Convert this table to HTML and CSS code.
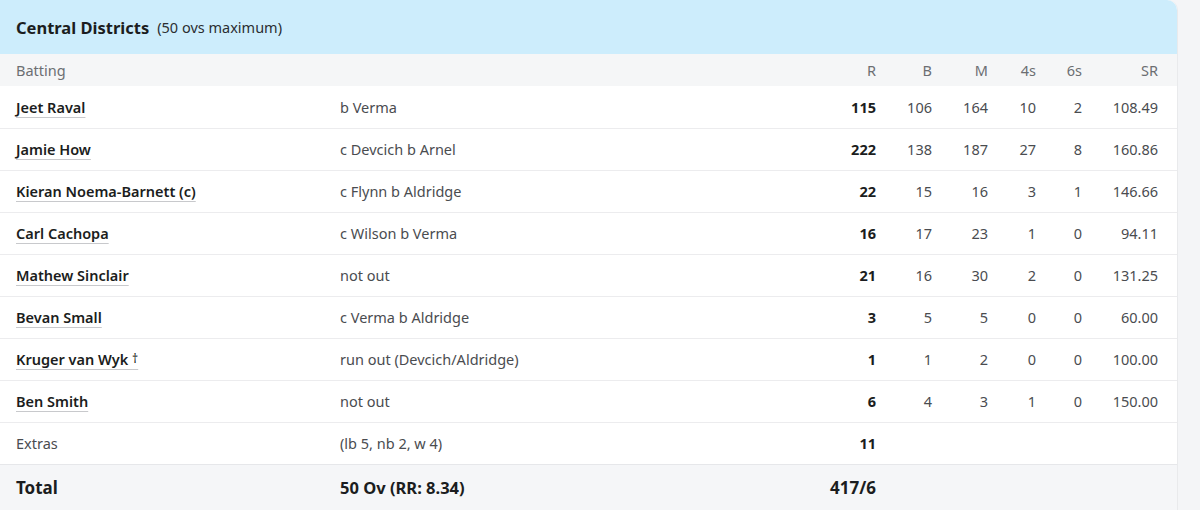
FILE: index.html
```html
<!DOCTYPE html>
<html>
<head>
<meta charset="utf-8">
<link rel="stylesheet" href="styles.css">
</head>
<body>
<div class="card">
  <div class="card-head">
    <span class="team">Central Districts</span>
    <span class="overs">(50 ovs maximum)</span>
  </div>
  <table class="score">
    <colgroup>
      <col class="c-name"><col class="c-dis"><col class="c-r"><col class="c-b"><col class="c-m"><col class="c-4"><col class="c-6"><col class="c-sr">
    </colgroup>
    <thead>
      <tr><th class="l">Batting</th><th></th><th>R</th><th>B</th><th>M</th><th>4s</th><th>6s</th><th class="last">SR</th></tr>
    </thead>
    <tbody>
      <tr><td class="l"><a class="name">Jeet Raval </a></td><td class="dis">b Verma</td><td class="runs">115</td><td>106</td><td>164</td><td>10</td><td>2</td><td class="last">108.49</td></tr>
      <tr><td class="l"><a class="name">Jamie How </a></td><td class="dis">c Devcich b Arnel</td><td class="runs">222</td><td>138</td><td>187</td><td>27</td><td>8</td><td class="last">160.86</td></tr>
      <tr><td class="l"><a class="name">Kieran Noema-Barnett (c)</a></td><td class="dis">c Flynn b Aldridge</td><td class="runs">22</td><td>15</td><td>16</td><td>3</td><td>1</td><td class="last">146.66</td></tr>
      <tr><td class="l"><a class="name">Carl Cachopa </a></td><td class="dis">c Wilson b Verma</td><td class="runs">16</td><td>17</td><td>23</td><td>1</td><td>0</td><td class="last">94.11</td></tr>
      <tr><td class="l"><a class="name">Mathew Sinclair </a></td><td class="dis">not out</td><td class="runs">21</td><td>16</td><td>30</td><td>2</td><td>0</td><td class="last">131.25</td></tr>
      <tr><td class="l"><a class="name">Bevan Small </a></td><td class="dis">c Verma b Aldridge</td><td class="runs">3</td><td>5</td><td>5</td><td>0</td><td>0</td><td class="last">60.00</td></tr>
      <tr><td class="l"><a class="name">Kruger van Wyk <span class="wk">†</span></a></td><td class="dis">run out (Devcich/Aldridge)</td><td class="runs">1</td><td>1</td><td>2</td><td>0</td><td>0</td><td class="last">100.00</td></tr>
      <tr><td class="l"><a class="name">Ben Smith </a></td><td class="dis">not out</td><td class="runs">6</td><td>4</td><td>3</td><td>1</td><td>0</td><td class="last">150.00</td></tr>
      <tr class="extras"><td class="l">Extras</td><td class="dis">(lb 5, nb 2, w 4)</td><td class="runs">11</td><td></td><td></td><td></td><td></td><td class="last"></td></tr>
    </tbody>
    <tfoot>
      <tr class="total"><td class="l">Total</td><td class="dis">50 Ov (RR: 8.34)</td><td class="runs">417/6</td><td></td><td></td><td></td><td></td><td class="last"></td></tr>
    </tfoot>
  </table>
</div>
</body>
</html>
```

FILE: styles.css
```css
html, body {
  margin: 0;
  padding: 0;
  background: #f4f5f7;
}
body {
  font-family: "Noto Sans", "Open Sans", sans-serif;
  color: #222;
  width: 1200px;
  height: 510px;
  overflow: hidden;
}
.card {
  width: 1178px;
  background: #fff;
  border-top-right-radius: 10px;
  border-right: 1px solid #e9eaec;
  box-sizing: border-box;
}
.card-head {
  height: 54px;
  background: #cdedfc;
  border-top-right-radius: 10px;
  display: flex;
  align-items: center;
  padding-left: 16px;
  gap: 8px;
}
.team {
  font-size: 16.5px;
  font-weight: 700;
  color: #1b1d20;
}
.overs {
  font-size: 14.5px;
  color: #2b2d31;
}
.score {
  width: 100%;
  border-collapse: collapse;
  table-layout: fixed;
  font-size: 14.5px;
}
.c-name { width: 324px; }
.c-dis { width: 488px; }
.c-r { width: 80px; }
.c-b { width: 56px; }
.c-m { width: 56px; }
.c-4 { width: 48px; }
.c-6 { width: 46px; }
.c-sr { width: 79px; }
.score th, .score td {
  text-align: right;
  padding: 0 16px 0 0;
  white-space: nowrap;
}
.score th.l, .score td.l, .score td.dis {
  text-align: left;
  padding: 0 0 0 16px;
}
.score th.last, .score td.last {
  padding-right: 19px;
}
.score thead tr {
  height: 32px;
  background: #f5f6f7;
}
.score th {
  font-weight: 400;
  color: #6c6e72;
  font-size: 14.5px;
}
.score tbody tr {
  height: 42px;
  border-bottom: 1px solid #ececee;
}
.score tbody td {
  color: #4a4c50;
}
.score td.l {
  color: #1b1d20;
}
.name {
  font-weight: 600;
  color: #1b1d20;
  text-decoration: underline;
  text-decoration-color: #c8c9cc;
  text-underline-offset: 4px;
  text-decoration-thickness: 1px;
}
.wk {
  font-weight: 400;
  font-size: 12px;
  vertical-align: 2px;
}
.score td.runs {
  font-weight: 700;
  color: #1b1d20;
}
.score tbody tr.extras td.l {
  font-weight: 400;
  color: #4a4c50;
}
.score tbody tr.extras {
  border-bottom: 1px solid #e6e7ea;
}
.total {
  height: 46px;
  background: #f5f6f8;
}
.total td.l {
  font-size: 17px;
  font-weight: 700;
  color: #1b1d20;
}
.score .total td.dis {
  font-size: 16.5px;
  font-weight: 700;
  color: #1b1d20;
}
.total td.runs {
  font-size: 17px;
}
```
